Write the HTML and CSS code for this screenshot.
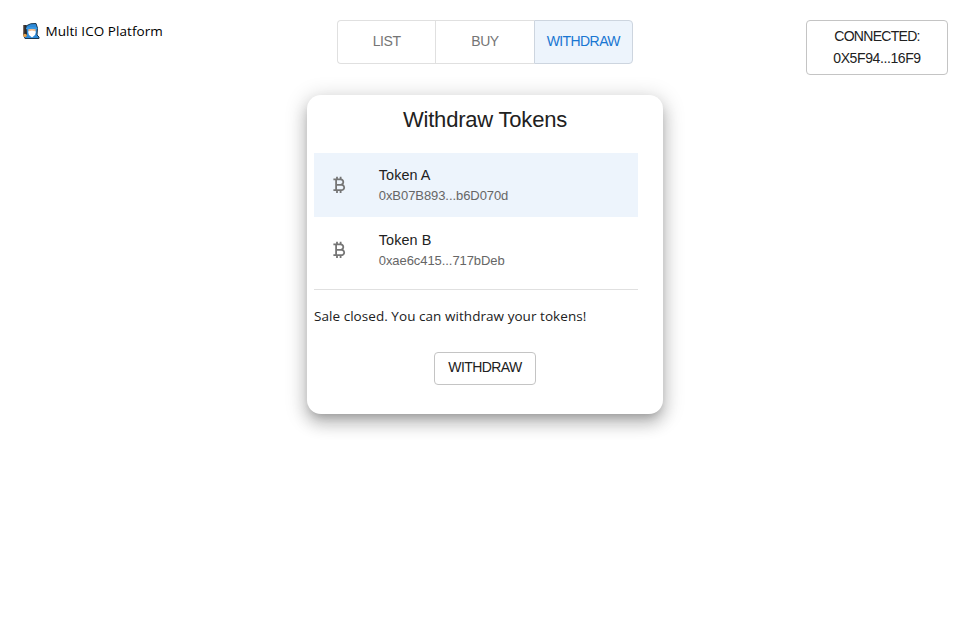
FILE: index.html
```html
<!DOCTYPE html>
<html lang="en">
<head>
<meta charset="utf-8">
<title>Multi ICO Platform</title>
<link rel="stylesheet" href="styles.css">
</head>
<body>
<header class="header">
  <div class="brand">
    <svg class="logo" viewBox="0 0 18 18" aria-hidden="true">
      <path d="M5 3.500 Q8 1 14 1.500 L15.500 6 L15 13 L17 15 V16.500 H3 L2 14 L3 5 Z" fill="#2e8ad8" stroke="#1b3850" stroke-width="1"/>
      <path d="M2 3 H4.500 L5 12 L4 15 H2 Z" fill="#292b2d"/>
      <path d="M2 3 V14" stroke="#4e3b30" stroke-width="1.500"/>
      <path d="M6 7.500 Q10 6 14 7.500 L13 10 H7 Z" fill="#f5bc8a"/>
      <path d="M6 9.500 L10 8.500 L14 9.500 L13 13 L10 15.500 L7 13 Z" fill="#fff"/>
      <path d="M4 6.500 Q9 5 15.500 6.500" fill="none" stroke="#3c9ce5" stroke-width="1.500"/>
      <circle cx="3" cy="13.500" r="1.800" fill="#e8a24b"/>
    </svg>
    <span class="brand-name">Multi ICO Platform</span>
  </div>
  <nav class="tabs">
    <button class="tab">LIST</button>
    <button class="tab">BUY</button>
    <button class="tab active"><span class="wide">WITHDRAW</span></button>
  </nav>
  <button class="account"><span class="connected">CONNECTED:</span><span class="address">0X5F94...16F9</span></button>
</header>
<main class="card">
  <h1 class="title">Withdraw Tokens</h1>
  <ul class="tokens">
    <li class="token selected">
      <svg class="coin" viewBox="0 0 24 24" aria-hidden="true"><path d="M17.060 11.570c.59-.69.94-1.590.94-2.570 0-1.860-1.270-3.430-3-3.870V3h-2v2h-2V3H9v2H6v2h2v10H6v2h3v2h2v-2h2v2h2v-2c2.210 0 4-1.790 4-4 0-1.450-.78-2.730-1.940-3.430zM10 7h4c1.100 0 2 .9 2 2s-.9 2-2 2h-4V7zm5 10h-5v-4h5c1.100 0 2 .9 2 2s-.9 2-2 2z"/></svg>
      <div><div class="name">Token A</div><div class="contract">0xB07B893...b6D070d</div></div>
    </li>
    <li class="token">
      <svg class="coin" viewBox="0 0 24 24" aria-hidden="true"><path d="M17.060 11.570c.59-.69.94-1.590.94-2.570 0-1.860-1.270-3.430-3-3.870V3h-2v2h-2V3H9v2H6v2h2v10H6v2h3v2h2v-2h2v2h2v-2c2.210 0 4-1.790 4-4 0-1.450-.78-2.730-1.940-3.430zM10 7h4c1.100 0 2 .9 2 2s-.9 2-2 2h-4V7zm5 10h-5v-4h5c1.100 0 2 .9 2 2s-.9 2-2 2z"/></svg>
      <div><div class="name">Token B</div><div class="contract">0xae6c415...717bDeb</div></div>
    </li>
  </ul>
  <p class="status">Sale closed. You can withdraw your tokens!</p>
  <button class="withdraw"><span class="wide">WITHDRAW</span></button>
</main>
</body>
</html>
```

FILE: styles.css
```css
* { box-sizing: border-box; }
body {
  margin: 0;
  min-height: 100vh;
  background: #fff;
  color: #212121;
  font-family: "Liberation Sans", Arial, sans-serif;
}
button {
  font: inherit;
  padding: 0;
  background: #fff;
}
.header {
  display: grid;
  grid-template-columns: 1fr 296px 1fr;
  align-items: start;
  padding: 20px 22px 0;
  height: 95px;
}
.brand {
  display: flex;
  align-items: center;
  height: 22px;
}
.logo {
  width: 18px;
  height: 18px;
  margin-right: 5.500px;
}
.brand-name, .status {
  font-family: "Open Sans", "Noto Sans", sans-serif;
  font-size: 13.500px;
  line-height: 20px;
  letter-spacing: .05px;
  white-space: nowrap;
}
.brand-name { color: #000; }
.tabs {
  display: flex;
  height: 44px;
}
.tab {
  flex: 1;
  padding-bottom: 2px;
  border: 1px solid #e0e0e0;
  border-right: 0;
  color: #757575;
  font-size: 14px;
  line-height: 22px;
  letter-spacing: -.4px;
}
.tab:first-child { border-radius: 4px 0 0 4px; }
.tab:last-child { border-radius: 0 4px 4px 0; }
.tab.active {
  border: 1px solid #cdd5df;
  background: #edf4fc;
  color: #1976d2;
}
.wide { letter-spacing: -.58px; }
.account {
  justify-self: end;
  display: flex;
  flex-direction: column;
  align-items: center;
  justify-content: center;
  width: 142px;
  height: 55px;
  padding-bottom: 2px;
  border: 1px solid #c4c4c4;
  border-radius: 4px;
  color: #212121;
  font-size: 14px;
  line-height: 22px;
}
.connected { letter-spacing: -.7px; }
.address { letter-spacing: -.4px; }
.card {
  display: flex;
  flex-direction: column;
  width: 356px;
  height: 319px;
  margin: 0 auto;
  padding: 7px;
  border-radius: 14px;
  background: #fff;
  box-shadow: 0 6px 8px -4px rgba(0,0,0,.2), 0 10px 15px 1px rgba(0,0,0,.14), 0 4px 20px 3px rgba(0,0,0,.17);
}
.title {
  margin: 0;
  height: 34px;
  font-size: 22px;
  line-height: 36px;
  font-weight: 400;
  letter-spacing: -.2px;
  text-align: center;
}
.tokens {
  display: flex;
  flex-direction: column;
  gap: 1px;
  width: 324px;
  height: 137px;
  margin: 17px 0 0;
  padding: 0;
  border-bottom: 1px solid #e0e0e0;
  list-style: none;
}
.token {
  display: flex;
  align-items: center;
  height: 64px;
  padding-left: 14.400px;
}
.selected { background: #edf4fc; }
.coin {
  width: 21.600px;
  height: 21.600px;
  margin-right: 28.800px;
  fill: #757575;
}
.name {
  font-size: 14.400px;
  line-height: 21px;
  letter-spacing: .08px;
}
.contract {
  color: #666;
  font-size: 13px;
  line-height: 19px;
  letter-spacing: -.07px;
}
.status {
  margin: 16px 0 0;
  color: #212121;
}
.withdraw {
  align-self: center;
  width: 102px;
  height: 33px;
  margin-top: 26px;
  padding-bottom: 3px;
  border: 1px solid #c4c4c4;
  border-radius: 4px;
  color: #212121;
  font-size: 14px;
  line-height: 20px;
}
```
